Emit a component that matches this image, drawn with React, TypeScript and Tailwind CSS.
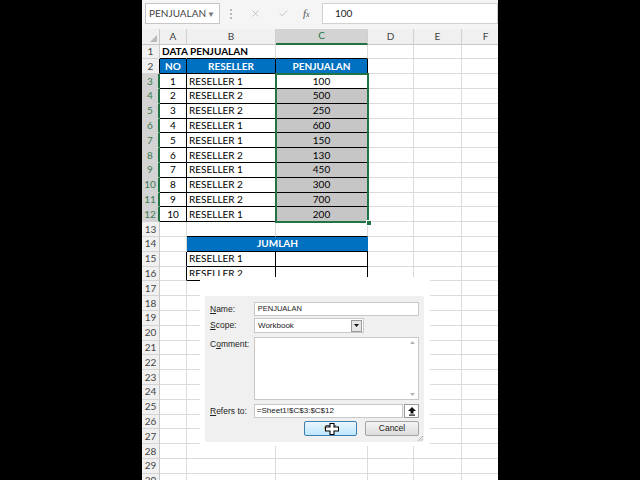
import { X, Check } from "lucide-react";
import type { ReactNode } from "react";

// Excel sheet with a "New Name" dialog over it
const colW = ["w-[27px]", "w-[89px]", "w-[92px]", "w-[46px]", "w-[48px]", "w-[48px]"];
const cols = ["A", "B", "C", "D", "E", "F"];

const data = [
  { no: 1, r: "RESELLER 1", v: 100 },
  { no: 2, r: "RESELLER 2", v: 500 },
  { no: 3, r: "RESELLER 2", v: 250 },
  { no: 4, r: "RESELLER 1", v: 600 },
  { no: 5, r: "RESELLER 1", v: 150 },
  { no: 6, r: "RESELLER 2", v: 130 },
  { no: 7, r: "RESELLER 1", v: 450 },
  { no: 8, r: "RESELLER 2", v: 300 },
  { no: 9, r: "RESELLER 2", v: 700 },
  { no: 10, r: "RESELLER 1", v: 200 },
];

const rowNums = Array.from({ length: 30 }, (_, i) => i + 1);

function Cell({ r, c }: { r: number; c: number }) {
  const d = r >= 3 && r <= 12 ? data[r - 3] : null;
  let bg = "bg-white";
  let rb = "border-r-[#dadada]";
  let bb = "border-b-[#dadada]";
  let txt = "text-black";
  let align = "justify-start pl-[2px]";
  let extra = "";
  let content: ReactNode = null;

  if (r === 1 && c <= 2) bb = "border-b-black";
  if (r >= 2 && r <= 12 && c <= 2) {
    rb = "border-r-black";
    bb = "border-b-black";
  }
  if (r === 13 && (c === 1 || c === 2)) bb = "border-b-black";
  if ((r === 15 || r === 16) && c <= 2) {
    rb = "border-r-black";
    if (c >= 1) bb = "border-b-black";
  }

  if (r === 1 && c === 0) {
    rb = "border-r-transparent";
    extra = "relative z-10 overflow-visible";
    content = <span className="font-bold">DATA PENJUALAN</span>;
  }
  if (r === 2 && c <= 2) {
    bg = "bg-[#0070c0]";
    txt = "text-white font-bold";
    align = "justify-center";
    content = ["NO", "RESELLER", "PENJUALAN"][c];
  }
  if (d && c === 0) {
    align = "justify-center";
    content = d.no;
  }
  if (d && c === 1) content = d.r;
  if (d && c === 2) {
    align = "justify-center";
    content = d.v;
    if (r > 3) bg = "bg-[#c6c6c6]";
  }
  if (r === 15 && c === 1) content = "RESELLER 1";
  if (r === 16 && c === 1) {
    align = "items-start pl-[2px]";
    content = (
      <span className="block h-[10px] overflow-hidden leading-[14px] pt-0 -mt-[1px]">RESELLER 2</span>
    );
  }

  return (
    <div
      className={`${colW[c]} ${bg} ${rb} ${bb} ${txt} ${align} ${extra} shrink-0 h-full border-r border-b flex items-center whitespace-nowrap`}
    >
      {content}
    </div>
  );
}

function Row({ r }: { r: number }) {
  const sel = r >= 3 && r <= 12;
  return (
    <div className="flex h-[14.8px]">
      <div
        className={`w-[18px] shrink-0 h-full border-b border-b-[#d4d4d4] flex items-center justify-center text-[10px] ${
          sel
            ? "bg-[#d3d3d3] text-[#3d7a52] border-r-2 border-r-[#217346]"
            : r === 2
            ? "bg-[#f0f0f0] text-[#444] border-r border-r-black"
            : "bg-[#f0f0f0] text-[#444] border-r border-r-[#c8c8c8]"
        }`}
      >
        {r}
      </div>
      {r === 14 ? (
        <>
          <Cell r={14} c={0} />
          <div className="w-[181px] shrink-0 h-full bg-[#0070c0] border-b border-b-black flex items-center justify-center text-white font-bold">
            JUMLAH
          </div>
          <Cell r={14} c={3} />
          <Cell r={14} c={4} />
          <Cell r={14} c={5} />
        </>
      ) : (
        cols.map((_, c) => <Cell key={c} r={r} c={c} />)
      )}
    </div>
  );
}

function FormulaBar() {
  return (
    <div className="h-[29px] bg-[#f5f5f5] flex items-start pt-[3px] font-['Lato',sans-serif] text-[10px] text-[#444]">
      <div className="ml-[3px] w-[75px] h-[21px] bg-white border border-[#c6c6c6] flex items-center justify-between pl-[3px] pr-[4px]">
        <span>PENJUALAN</span>
        <span className="text-[8px] text-[#777]">▼</span>
      </div>
      <div className="w-[21px] h-[21px] flex flex-col items-center justify-center gap-[2px]">
        <span className="w-[2px] h-[2px] bg-[#b8b8b8]" />
        <span className="w-[2px] h-[2px] bg-[#b8b8b8]" />
        <span className="w-[2px] h-[2px] bg-[#b8b8b8]" />
      </div>
      <div className="w-[79px] h-[21px] flex items-center text-[#a8a8a8]">
        <X size={11} strokeWidth={1.3} className="ml-[9px]" />
        <Check size={11} strokeWidth={1.3} className="ml-[17px]" />
        <span className="ml-[14px] font-['Liberation_Serif',serif] italic text-[11px] text-[#555]">
          f<span className="text-[8px]">x</span>
        </span>
      </div>
      <div className="ml-[2px] flex-1 h-[21px] bg-white border border-[#d0d0d0] flex items-center pl-[12px] text-[#222]">
        100
      </div>
    </div>
  );
}

function ColHeaders() {
  return (
    <div className="flex h-[15.6px] font-['Lato',sans-serif] text-[10px]">
      <div className="w-[18px] shrink-0 h-full bg-[#f0f0f0] border-r border-b border-[#c8c8c8] flex items-end justify-end p-[2px]">
        <svg width="7" height="7" viewBox="0 0 7 7">
          <polygon points="7,0 7,7 0,7" fill="#b9b9b9" />
        </svg>
      </div>
      {cols.map((l, c) => (
        <div
          key={l}
          className={`${colW[c]} shrink-0 h-full border-r border-r-[#d0d0d0] flex items-center justify-center ${
            c === 2
              ? "bg-[#d3d3d3] text-[#217346] border-b-2 border-b-[#217346]"
              : "bg-[#f0f0f0] text-[#444] border-b border-b-[#c8c8c8]"
          }`}
        >
          {l}
        </div>
      ))}
    </div>
  );
}

function Dialog() {
  return (
    <div className="absolute left-[58px] top-[277px] w-[230px] h-[169px] bg-white">
      <div className="relative ml-[5px] mt-[19px] w-[219px] h-[146px] bg-[#f0f0f0] rounded-[2px] px-[5px] pt-[6px] font-['Liberation_Sans',sans-serif] text-[8.5px] text-[#222]">
        <div className="flex h-[14px] items-center">
          <div className="w-[44px]">
            <span className="underline">N</span>ame:
          </div>
          <div className="w-[166px] h-full bg-white border border-[#c8c8c8] flex items-center pl-[3px] text-[7.5px]">
            PENJUALAN
          </div>
        </div>
        <div className="flex h-[15px] items-center mt-[2px]">
          <div className="w-[44px]">
            <span className="underline">S</span>cope:
          </div>
          <div className="w-[110px] h-full bg-white border border-[#c8c8c8] flex items-center justify-between pl-[3px] text-[8px]">
            <span>Workbook</span>
            <div className="w-[11px] h-[12px] mr-[1px] bg-[#e6e6e6] border border-[#9a9a9a] flex items-center justify-center">
              <svg width="5" height="3" viewBox="0 0 5 3">
                <polygon points="0,0 5,0 2.5,3" fill="#111" />
              </svg>
            </div>
          </div>
        </div>
        <div className="flex h-[63px] items-start mt-[4px]">
          <div className="w-[44px] pt-[1px]">
            C<span className="underline">o</span>mment:
          </div>
          <div className="w-[166px] h-full bg-white border border-[#c8c8c8] flex justify-end">
            <div className="w-[11px] h-full flex flex-col items-center justify-between py-[3px]">
              <svg width="5" height="3" viewBox="0 0 5 3">
                <polygon points="0,3 5,3 2.5,0" fill="#b5b5b5" />
              </svg>
              <svg width="5" height="3" viewBox="0 0 5 3">
                <polygon points="0,0 5,0 2.5,3" fill="#b5b5b5" />
              </svg>
            </div>
          </div>
        </div>
        <div className="flex h-[14px] items-center mt-[4px]">
          <div className="w-[44px]">
            <span className="underline">R</span>efers to:
          </div>
          <div className="w-[150px] h-full bg-white border border-[#c8c8c8] flex items-center pl-[2px] text-[8px]">
            =Sheet1!$C$3:$C$12
          </div>
          <div className="ml-[1px] w-[15px] h-full bg-white border border-[#9a9a9a] flex items-center justify-center">
            <svg width="8" height="9" viewBox="0 0 8 9">
              <polygon points="4,0 8,4 5.5,4 5.5,6.5 2.5,6.5 2.5,4 0,4" fill="#111" />
              <rect x="1" y="7.5" width="6" height="1.2" fill="#111" />
            </svg>
          </div>
        </div>
        <div className="flex h-[15px] mt-[3px]">
          <div className="relative ml-[94px] w-[53px] h-full rounded-[2px] border border-[#3c7fb1] bg-gradient-to-b from-[#eaf6fd] to-[#bee6fd] flex items-center justify-center">
            <span>OK</span>
            <svg className="absolute left-[20px] top-[1px]" width="14" height="12" viewBox="0 0 14 12">
              <polygon
                points="5,0.5 9,0.5 9,4 13.5,4 13.5,8 9,8 9,11.5 5,11.5 5,8 0.5,8 0.5,4 5,4"
                fill="#fff"
                stroke="#000"
                strokeWidth="1.1"
              />
            </svg>
          </div>
          <div className="ml-[8px] w-[54px] h-full rounded-[2px] border border-[#a5a5a5] bg-gradient-to-b from-[#f4f4f4] to-[#dcdcdc] flex items-center justify-center">
            Cancel
          </div>
        </div>
        <svg className="absolute right-[1px] bottom-[1px]" width="6" height="6" viewBox="0 0 6 6">
          <line x1="6" y1="1" x2="1" y2="6" stroke="#a0a0a0" strokeWidth="0.8" />
          <line x1="6" y1="3.5" x2="3.5" y2="6" stroke="#a0a0a0" strokeWidth="0.8" />
        </svg>
      </div>
    </div>
  );
}

export default function App() {
  return (
    <div className="w-[640px] h-[480px] bg-black flex">
      <div className="relative ml-[142px] w-[356px] h-[480px] bg-white overflow-hidden">
        <FormulaBar />
        <ColHeaders />
        <div className="font-['Lato',sans-serif] text-[10px]">
          {rowNums.map((r) => (
            <Row key={r} r={r} />
          ))}
        </div>
        {/* selection C3:C12 */}
        <div className="absolute left-[133px] top-[73.2px] w-[94px] h-[150px] border-2 border-[#217346] pointer-events-none" />
        <div className="absolute left-[223.5px] top-[219.5px] w-[6px] h-[6px] bg-[#217346] border border-white" />
        <Dialog />
      </div>
    </div>
  );
}
